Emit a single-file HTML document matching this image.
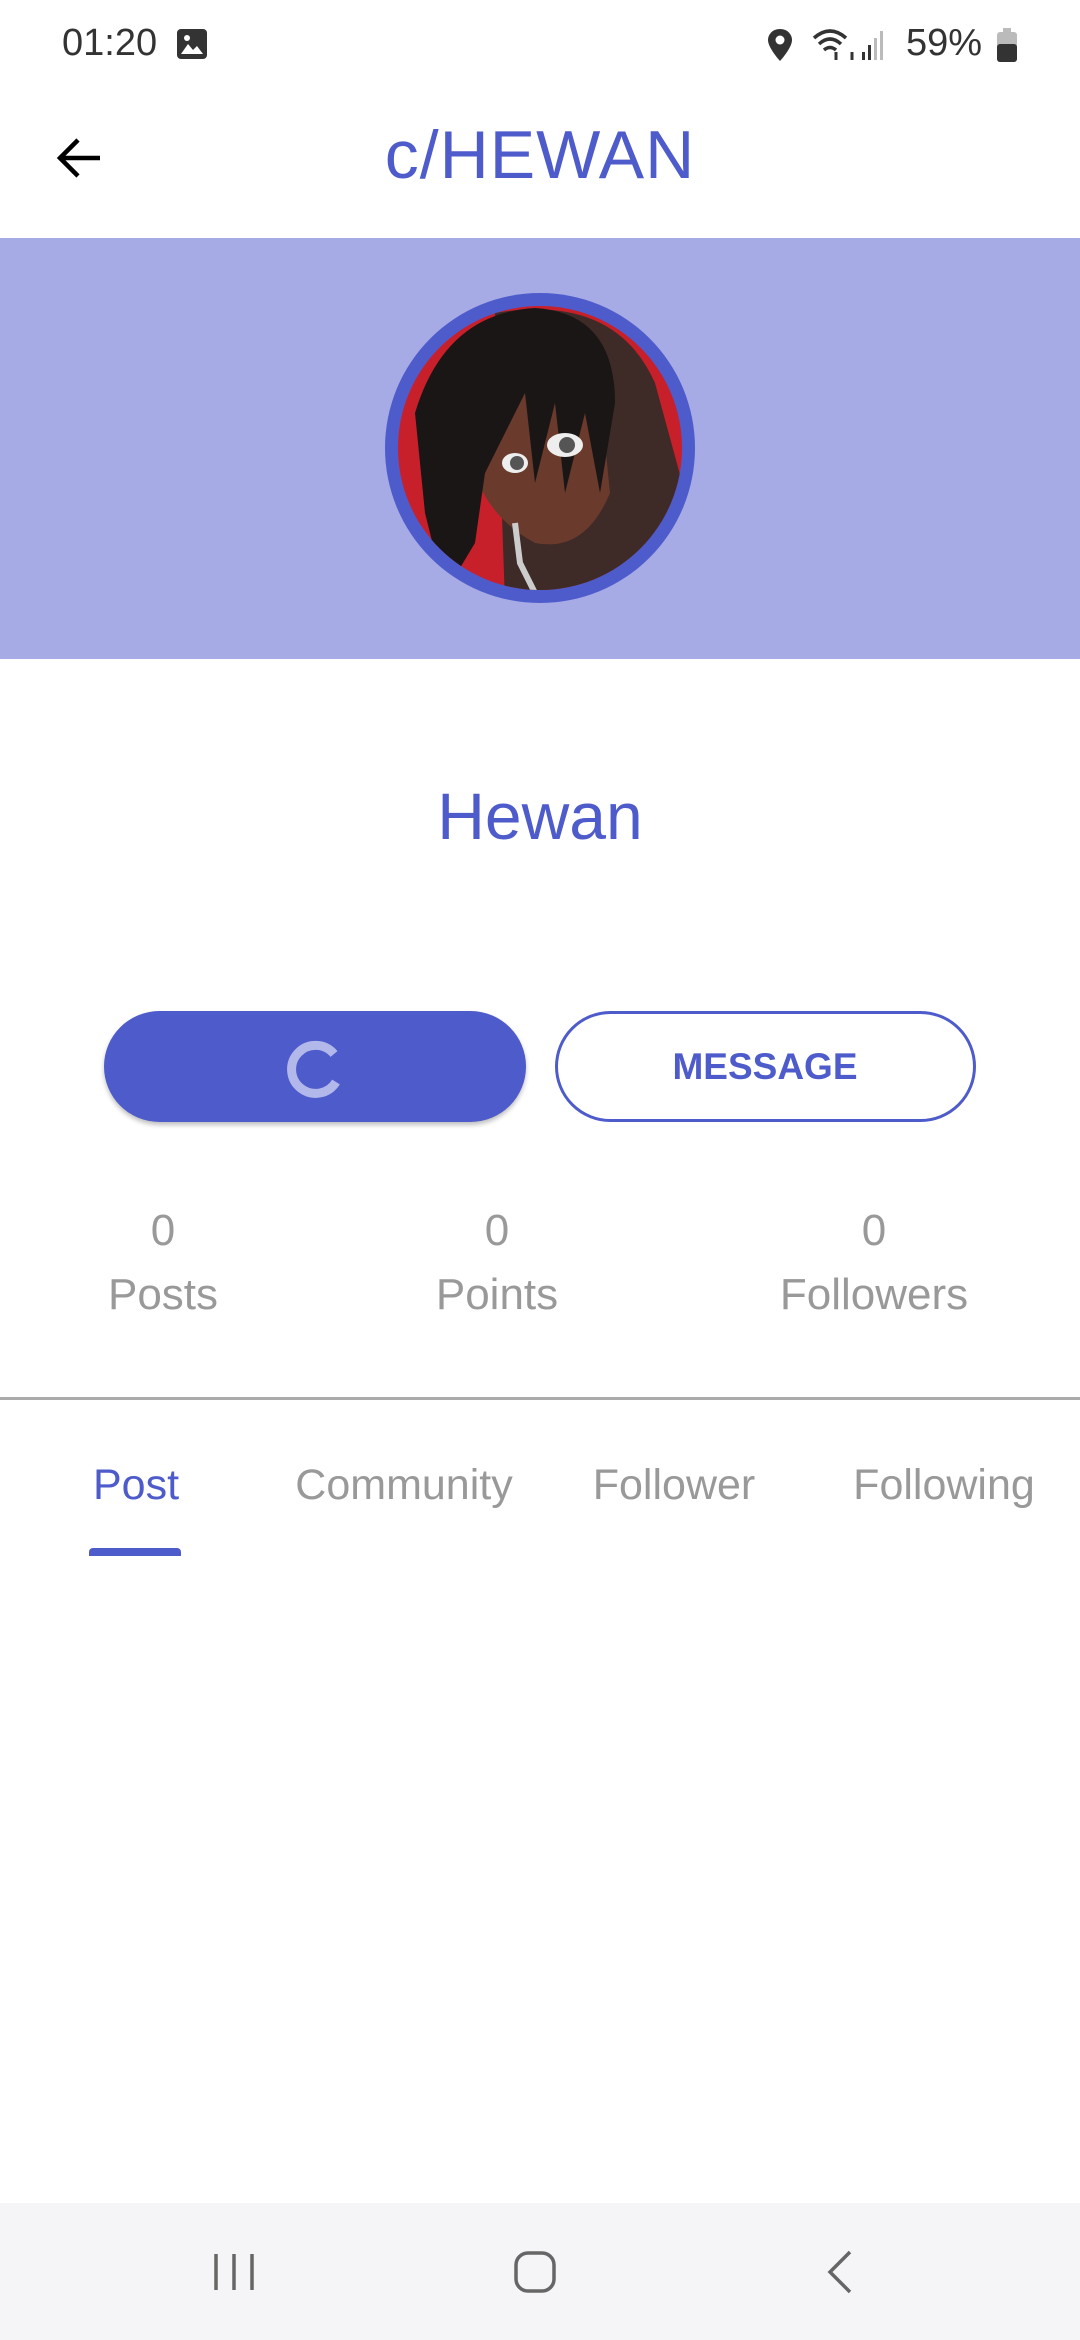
<!DOCTYPE html>
<html><head><meta charset="utf-8"><style>
*{margin:0;padding:0;box-sizing:border-box}
body{width:1080px;height:2340px;background:#fff;font-family:"Liberation Sans",sans-serif;position:relative;overflow:hidden}
.a{position:absolute}
.c{text-align:center;transform:translateX(-50%)}
</style></head><body>
<div class="a" style="left:62px;top:22px;font-size:38px;color:#333">01:20</div>
<svg class="a" style="left:176px;top:28px" width="32" height="32" viewBox="0 0 32 32"><rect x="1" y="1" width="30" height="30" rx="4" fill="#333"/><path d="M5 26 L12 16 L17 22 L21 18 L27 26 Z" fill="#fff"/><circle cx="11" cy="10" r="3" fill="#fff"/></svg>
<svg class="a" style="left:766px;top:28px" width="28" height="34" viewBox="0 0 28 34"><path d="M14 1 C6 1 2 7 2 12 C2 20 14 33 14 33 C14 33 26 20 26 12 C26 7 22 1 14 1Z" fill="#333"/><circle cx="14" cy="12" r="4.5" fill="#fff"/></svg>
<svg class="a" style="left:810px;top:26px" width="80" height="36" viewBox="0 0 80 36"><path d="M4 12 Q20 -2 36 12 M9 18 Q20 8 31 18 M14 24 Q20 19 26 24" stroke="#333" stroke-width="3.5" fill="none"/><path d="M26 26 v8 M42 34 v-8" stroke="#333" stroke-width="3"/><rect x="52" y="26" width="3" height="8" fill="#333"/><rect x="58" y="19" width="3" height="15" fill="#333"/><rect x="64" y="12" width="3" height="22" fill="#bbb"/><rect x="70" y="5" width="3" height="29" fill="#bbb"/></svg>
<div class="a" style="left:906px;top:22px;font-size:38px;color:#333">59%</div>
<svg class="a" style="left:996px;top:28px" width="22" height="34" viewBox="0 0 22 34"><rect x="7" y="0" width="8" height="4" fill="#bbb"/><rect x="1" y="4" width="20" height="30" rx="3" fill="#bbb"/><rect x="1" y="16" width="20" height="18" rx="3" fill="#333"/></svg>

<svg class="a" style="left:54px;top:136px" width="50" height="44" viewBox="0 0 50 44"><path d="M46 22 H6 M24 4 L6 22 L24 40" stroke="#000" stroke-width="4.5" fill="none"/></svg>
<div class="a c" style="left:540px;top:116px;font-size:68px;color:#4e5bcb;letter-spacing:1px">c/HEWAN</div>

<div class="a" style="left:0;top:238px;width:1080px;height:421px;background:#a6abe6"></div>
<svg class="a" style="left:385px;top:293px" width="310" height="310" viewBox="0 0 310 310">
<defs><clipPath id="cp"><circle cx="155" cy="155" r="142"/></clipPath></defs>
<circle cx="155" cy="155" r="155" fill="#4e5bcb"/>
<g clip-path="url(#cp)">
<rect width="310" height="310" fill="#c8202a"/>
<path d="M110 20 Q230 0 270 90 L300 200 L280 310 L120 310 Z" fill="#3e2a26"/>
<path d="M90 90 Q150 60 215 100 L225 200 Q200 260 150 250 Q95 220 85 160 Z" fill="#6a3a2c"/>
<path d="M30 120 Q60 20 150 15 Q230 20 230 110 L215 200 L200 120 L180 200 L170 110 L150 190 L140 100 L100 180 L90 250 L60 300 L40 220 Z" fill="#1a1616"/>
<ellipse cx="180" cy="152" rx="18" ry="12" fill="#eee"/><circle cx="182" cy="152" r="8" fill="#555"/>
<ellipse cx="130" cy="170" rx="13" ry="10" fill="#eee"/><circle cx="132" cy="170" r="7" fill="#555"/>
<path d="M130 230 L135 270 L150 300" stroke="#ccc" stroke-width="6" fill="none"/>
</g></svg>

<div class="a c" style="left:540px;top:778px;font-size:66px;color:#4e5bcb">Hewan</div>

<div class="a" style="left:104px;top:1011px;width:422px;height:111px;border-radius:56px;background:#4e5bcb;box-shadow:0 3px 5px rgba(0,0,0,.25)"></div>
<svg class="a" style="left:282px;top:1036px" width="66" height="66" viewBox="0 0 66 66"><path d="M52 18 A24 24 0 1 0 54 46" stroke="#b3b8ea" stroke-width="9" fill="none"/></svg>
<div class="a" style="left:555px;top:1011px;width:421px;height:111px;border-radius:56px;border:3px solid #4e5bcb"></div>
<div class="a c" style="left:765px;top:1046px;font-size:37px;color:#4e5bcb;font-weight:bold">MESSAGE</div>

<div class="a c" style="left:163px;top:1206px;font-size:44px;color:#999">0</div>
<div class="a c" style="left:497px;top:1206px;font-size:44px;color:#999">0</div>
<div class="a c" style="left:874px;top:1206px;font-size:44px;color:#999">0</div>
<div class="a c" style="left:163px;top:1270px;font-size:44px;color:#999">Posts</div>
<div class="a c" style="left:497px;top:1270px;font-size:44px;color:#999">Points</div>
<div class="a c" style="left:874px;top:1270px;font-size:44px;color:#999">Followers</div>

<div class="a" style="left:0;top:1397px;width:1080px;height:3px;background:#aaa"></div>

<div class="a c" style="left:136px;top:1461px;font-size:43px;color:#4e5bcb">Post</div>
<div class="a c" style="left:404px;top:1461px;font-size:43px;color:#999">Community</div>
<div class="a c" style="left:674px;top:1461px;font-size:43px;color:#999">Follower</div>
<div class="a c" style="left:944px;top:1461px;font-size:43px;color:#999">Following</div>
<div class="a" style="left:89px;top:1548px;width:92px;height:8px;border-radius:4px 4px 0 0;background:#4e5bcb"></div>

<div class="a" style="left:0;top:2203px;width:1080px;height:137px;background:#f5f5f7"></div>
<svg class="a" style="left:212px;top:2252px" width="44" height="40" viewBox="0 0 44 40"><path d="M4 2 v36 M22 2 v36 M40 2 v36" stroke="#666" stroke-width="3.5"/></svg>
<svg class="a" style="left:513px;top:2250px" width="44" height="44" viewBox="0 0 44 44"><rect x="3" y="3" width="38" height="38" rx="12" stroke="#666" stroke-width="3.5" fill="none"/></svg>
<svg class="a" style="left:826px;top:2250px" width="28" height="44" viewBox="0 0 28 44"><path d="M24 2 L4 22 L24 42" stroke="#666" stroke-width="3.5" fill="none"/></svg>
</body></html>
